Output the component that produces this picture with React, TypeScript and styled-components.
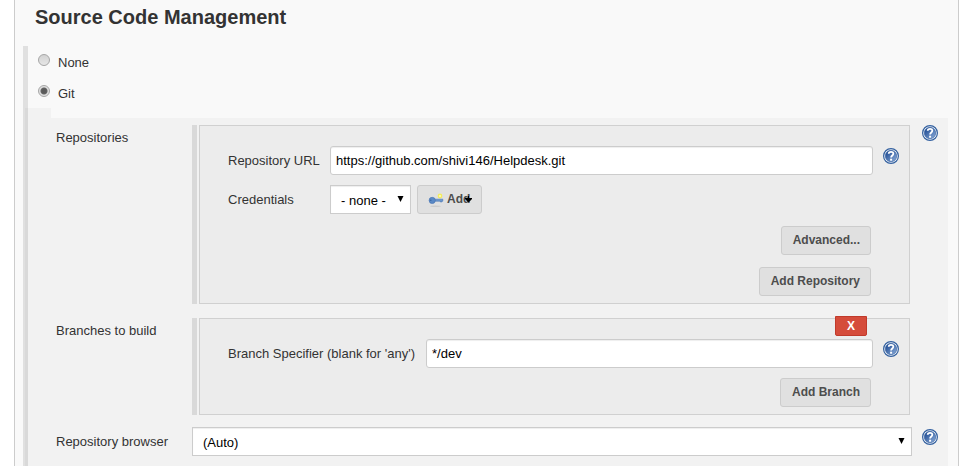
import React from 'react';
import styled, { createGlobalStyle } from 'styled-components';

const GlobalStyle = createGlobalStyle`
  *, *::before, *::after { box-sizing: border-box; }
  body {
    margin: 0;
    background: #fff;
    color: #333;
    font-family: "Liberation Sans", Arial, sans-serif;
    font-size: 13px;
    line-height: 16px;
  }
  button, input, select { font: inherit; margin: 0; }
`;

const Page = styled.main`
  display: flex;
  flex-direction: column;
  min-height: 100vh;
  padding: 0 6px 0 14px;
`;

const Panel = styled.section`
  flex: 1;
  display: flex;
  flex-direction: column;
  padding: 0 10px 0 8px;
  background: #f9f9f9;
  border: solid #ccc;
  border-width: 0 1px;
`;

const Title = styled.h1`
  margin: 0;
  padding: 5px 0 17px 12px;
  font-size: 20px;
  line-height: 24px;
`;

const Options = styled.div`
  flex: 1;
  display: flex;
  flex-direction: column;
  border-left: 5px solid #e0e0e0;
`;

const Option = styled.div`
  display: flex;
  align-items: flex-start;
  gap: 8px;
  height: 31px;
  padding: 8px 0 0 10px;

  label { padding-top: 1px; }
`;

const Radio = styled.input`
  appearance: none;
  width: 12px;
  height: 12px;
  border: 1px solid #a6a6a6;
  border-radius: 50%;
  background: linear-gradient(#d2d2d2, #e6e6e6);

  &:checked {
    background: radial-gradient(circle, #5a5a5a 0 2px, #666 3px, #e0e0e0 4px);
  }
`;

const Details = styled.div`
  flex: 1;
  display: flex;
  flex-direction: column;
  margin-left: -3px;
`;

const Notch = styled.div`
  width: 26px;
  height: 10px;
  background: rgba(0, 0, 0, 0.027);
`;

const Fields = styled.div`
  flex: 1;
  display: flex;
  flex-direction: column;
  gap: 12px;
  padding: 7px 10px 10px 31px;
  background: rgba(0, 0, 0, 0.027);
`;

const Field = styled.div`
  display: grid;
  grid-template-columns: 136px minmax(0, 1fr) 16px;
  align-items: start;
`;

const FieldLabel = styled.label<{ $top: number }>`
  padding-top: ${p => p.$top}px;
`;

const Group = styled.div<{ $bottom?: number }>`
  display: flex;
  gap: 2px;
  margin: 0 12px ${p => p.$bottom ?? 0}px 0;

  &::before {
    content: "";
    width: 5px;
    background: #d9d9d9;
  }
`;

const Box = styled.div`
  flex: 1;
  position: relative;
  padding: 20px 10px 7px 28px;
  background: #ececec;
  border: 1px solid #d0d0d0;
`;

const Row = styled.div`
  display: flex;
  align-items: flex-start;
  margin-bottom: 10px;
`;

const RowLabel = styled.label<{ $width: number }>`
  flex: 0 0 ${p => p.$width}px;
  padding-top: 7px;
  white-space: nowrap;
`;

const TextInput = styled.input`
  flex: 1;
  min-width: 0;
  height: 29px;
  margin-right: 10px;
  padding: 0 5px;
  color: #000;
  background: #fff;
  border: 1px solid #ccc;
  border-radius: 3px;
  box-shadow: inset 0 1px 1px rgba(0, 0, 0, 0.07);
`;

const SelectWrap = styled.div<{ $width?: string; $right: number }>`
  position: relative;
  width: ${p => p.$width ?? 'auto'};
  margin-right: ${p => p.$right}px;

  svg {
    position: absolute;
    right: 7px;
    top: 11px;
    pointer-events: none;
  }
`;

const Select = styled.select`
  display: block;
  appearance: none;
  width: 100%;
  height: 29px;
  padding: 3px 10px 0;
  color: #000;
  background: #fff;
  border: 1px solid #ccc;
  border-radius: 0;
  box-shadow: inset 0 1px 1px rgba(0, 0, 0, 0.07);
`;

const Button = styled.button`
  position: relative;
  display: inline-flex;
  align-items: center;
  height: 29px;
  padding: 0 10px 2px 11px;
  color: #4d4d4d;
  font-size: 12px;
  font-weight: bold;
  background: #e0e0e0;
  border: 1px solid #ccc;
  border-radius: 3px;
`;

const AddButton = styled(Button)`
  gap: 2px;
  padding-left: 10px;
  padding-right: 11px;
`;

const MenuArrow = styled.svg`
  position: absolute;
  right: 9px;
  top: 9px;
`;

const Actions = styled.div<{ $top?: number }>`
  display: flex;
  flex-direction: column;
  align-items: flex-end;
  gap: 12px;
  padding: ${p => p.$top ?? 0}px 28px 0 0;
`;

const DeleteButton = styled.button`
  position: absolute;
  top: -3px;
  right: 42px;
  width: 32px;
  height: 20px;
  padding: 0;
  color: #fff;
  font-size: 12px;
  font-weight: bold;
  line-height: 18px;
  background: #d54c3b;
  border: 1px solid #c03a2b;
  border-radius: 0 0 2px 2px;
`;

const HelpButton = styled.button<{ $top: number }>`
  flex: none;
  width: 16px;
  height: 16px;
  margin-top: ${p => p.$top}px;
  padding: 0;
  background: none;
  border: 0;

  svg { display: block; }
`;

function Help({ topic, top = 2 }: { topic: string; top?: number }) {
  return (
    <HelpButton type="button" $top={top} aria-label={`Help for feature: ${topic}`}>
      <svg width="16" height="16" viewBox="0 0 16 16">
        <defs>
          <linearGradient id="help-fill" x1="0" y1="0" x2="1" y2="1">
            <stop offset="0.2" stopColor="#2a559a" />
            <stop offset="1" stopColor="#8fb0dc" />
          </linearGradient>
        </defs>
        <circle cx="8" cy="8" r="7.4" fill="#f4f7fb" stroke="#33609f" strokeWidth="1.2" />
        <circle cx="8" cy="8" r="5.7" fill="url(#help-fill)" stroke="#2f5a9c" strokeWidth="0.6" />
        <path d="M5.7 5.8C5.8 3.2 10.4 3.1 10.3 5.8C10.3 7.5 8.1 7.5 8.1 9.6" fill="none" stroke="#fff" strokeWidth="1.8" />
        <rect x="7.1" y="10.7" width="2" height="2" fill="#fff" />
      </svg>
    </HelpButton>
  );
}

function Caret() {
  return (
    <svg width="7" height="6" viewBox="0 0 7 6" aria-hidden="true">
      <path d="M0.5 0H6.5L3.5 6Z" fill="#000" />
    </svg>
  );
}

function KeyIcon() {
  return (
    <svg width="17" height="16" viewBox="0 0 17 16" aria-hidden="true">
      <ellipse cx="7.5" cy="15.2" rx="5.5" ry="0.7" fill="#cbcbcb" />
      <circle cx="12" cy="5" r="2.4" fill="#f3ec60" />
      <circle cx="12" cy="5" r="1" fill="#fffbc4" />
      <path d="M6.5 8.2H14.8V10.2H13.8V11H12.4V10.2H6.5Z" fill="#6d98cf" stroke="#4675b4" strokeWidth="0.6" />
      <ellipse cx="4.2" cy="9.4" rx="3.1" ry="3.1" fill="#5a89c6" stroke="#4371b0" strokeWidth="0.6" />
      <circle cx="2.8" cy="9.3" r="0.7" fill="#35609c" />
    </svg>
  );
}

export default function App() {
  return (
    <>
      <GlobalStyle />
      <Page>
        <Panel>
          <Title>Source Code Management</Title>
          <Options>
            <Option>
              <Radio type="radio" name="scm" id="scm-none" />
              <label htmlFor="scm-none">None</label>
            </Option>
            <Option>
              <Radio type="radio" name="scm" id="scm-git" defaultChecked />
              <label htmlFor="scm-git">Git</label>
            </Option>
            <Details>
              <Notch />
              <Fields>
                <Field>
                  <FieldLabel as="span" $top={5}>Repositories</FieldLabel>
                  <Group $bottom={2}>
                    <Box>
                      <Row>
                        <RowLabel $width={102} htmlFor="repo-url">Repository URL</RowLabel>
                        <TextInput id="repo-url" type="text" defaultValue="https://github.com/shivi146/Helpdesk.git" />
                        <Help topic="Repository URL" />
                      </Row>
                      <Row>
                        <RowLabel $width={102} htmlFor="credentials">Credentials</RowLabel>
                        <SelectWrap $width="81px" $right={6}>
                          <Select id="credentials">
                            <option>- none -</option>
                          </Select>
                          <Caret />
                        </SelectWrap>
                        <AddButton type="button">
                          <KeyIcon />
                          Add
                          <MenuArrow width="7" height="9" viewBox="0 0 7 9" aria-hidden="true">
                            <path d="M3 1H4V3H7V4L4 7H3L0 4V3H3Z" fill="#000" />
                          </MenuArrow>
                        </AddButton>
                      </Row>
                      <Actions $top={2}>
                        <Button type="button">Advanced...</Button>
                        <Button type="button">Add Repository</Button>
                      </Actions>
                    </Box>
                  </Group>
                  <Help topic="Repositories" top={0} />
                </Field>
                <Field>
                  <FieldLabel as="span" $top={5}>Branches to build</FieldLabel>
                  <Group>
                    <Box>
                      <DeleteButton type="button" aria-label="Delete branch">X</DeleteButton>
                      <Row>
                        <RowLabel $width={198} htmlFor="branch">Branch Specifier (blank for 'any')</RowLabel>
                        <TextInput id="branch" type="text" defaultValue="*/dev" />
                        <Help topic="Branch Specifier" />
                      </Row>
                      <Actions>
                        <Button type="button">Add Branch</Button>
                      </Actions>
                    </Box>
                  </Group>
                </Field>
                <Field>
                  <FieldLabel htmlFor="browser" $top={7}>Repository browser</FieldLabel>
                  <SelectWrap $right={10}>
                    <Select id="browser">
                      <option>(Auto)</option>
                    </Select>
                    <Caret />
                  </SelectWrap>
                  <Help topic="Repository browser" />
                </Field>
              </Fields>
            </Details>
          </Options>
        </Panel>
      </Page>
    </>
  );
}
